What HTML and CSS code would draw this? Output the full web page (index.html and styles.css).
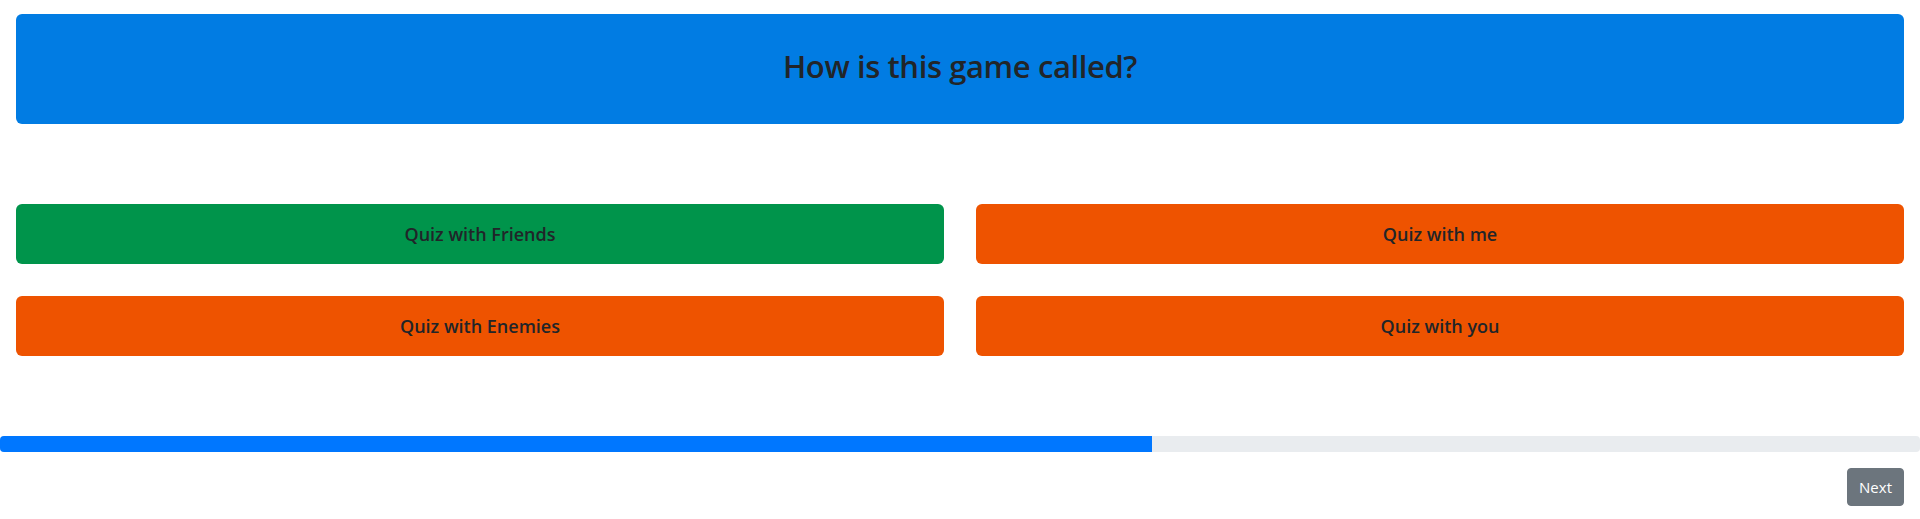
FILE: index.html
```html
<!DOCTYPE html>
<html lang="en">
<head>
<meta charset="utf-8">
<title>Quiz</title>
<link rel="stylesheet" href="styles.css">
</head>
<body>
<div class="wrap">
  <div class="question"><h1 class="question-text">How is this game called?</h1></div>
  <div class="answers">
    <button class="answer correct">Quiz with Friends</button>
    <button class="answer wrong">Quiz with me</button>
    <button class="answer wrong">Quiz with Enemies</button>
    <button class="answer wrong">Quiz with you</button>
  </div>
</div>
<div class="progress"><div class="progress-fill" style="width:60%"></div></div>
<div class="footer"><button class="next">Next</button></div>
</body>
</html>
```
FILE: styles.css
```css
* { box-sizing: border-box; }
html, body { margin: 0; padding: 0; background: #fff; }
body { font-family: "Open Sans", "Noto Sans", sans-serif; color: #212529; }
.wrap { padding: 14px 16px 0; }
.question {
  height: 110px;
  background: #017ce3;
  border-radius: 6px;
  display: flex;
  align-items: center;
  justify-content: center;
  padding-bottom: 4px;
}
.question-text { margin: 0; font-size: 31px; font-weight: 600; line-height: 1.2; letter-spacing: -0.4px; }
.answers {
  margin-top: 80px;
  display: grid;
  grid-template-columns: 1fr 1fr;
  gap: 32px;
}
.answer {
  height: 60px;
  border: 0;
  border-radius: 6px;
  font-family: "Open Sans", "Noto Sans", sans-serif;
  font-size: 18px;
  font-weight: 600;
  color: #212529;
  display: flex;
  align-items: center;
  justify-content: center;
  padding: 0;
}
.correct { background: #00944b; }
.wrong { background: #ee5300; }
.progress {
  margin-top: 80px;
  height: 16px;
  background: #e9ecef;
  border-radius: 4px;
  overflow: hidden;
  display: flex;
}
.progress-fill { background: #0077ff; height: 100%; }
.footer { display: flex; justify-content: flex-end; padding: 16px 16px 0; }
.next {
  height: 38px;
  padding: 0 11px;
  background: #6c757d;
  border: 1px solid #6c757d;
  border-radius: 4px;
  color: #fff;
  font-family: "Open Sans", "Noto Sans", sans-serif;
  font-size: 15px;
}
```
